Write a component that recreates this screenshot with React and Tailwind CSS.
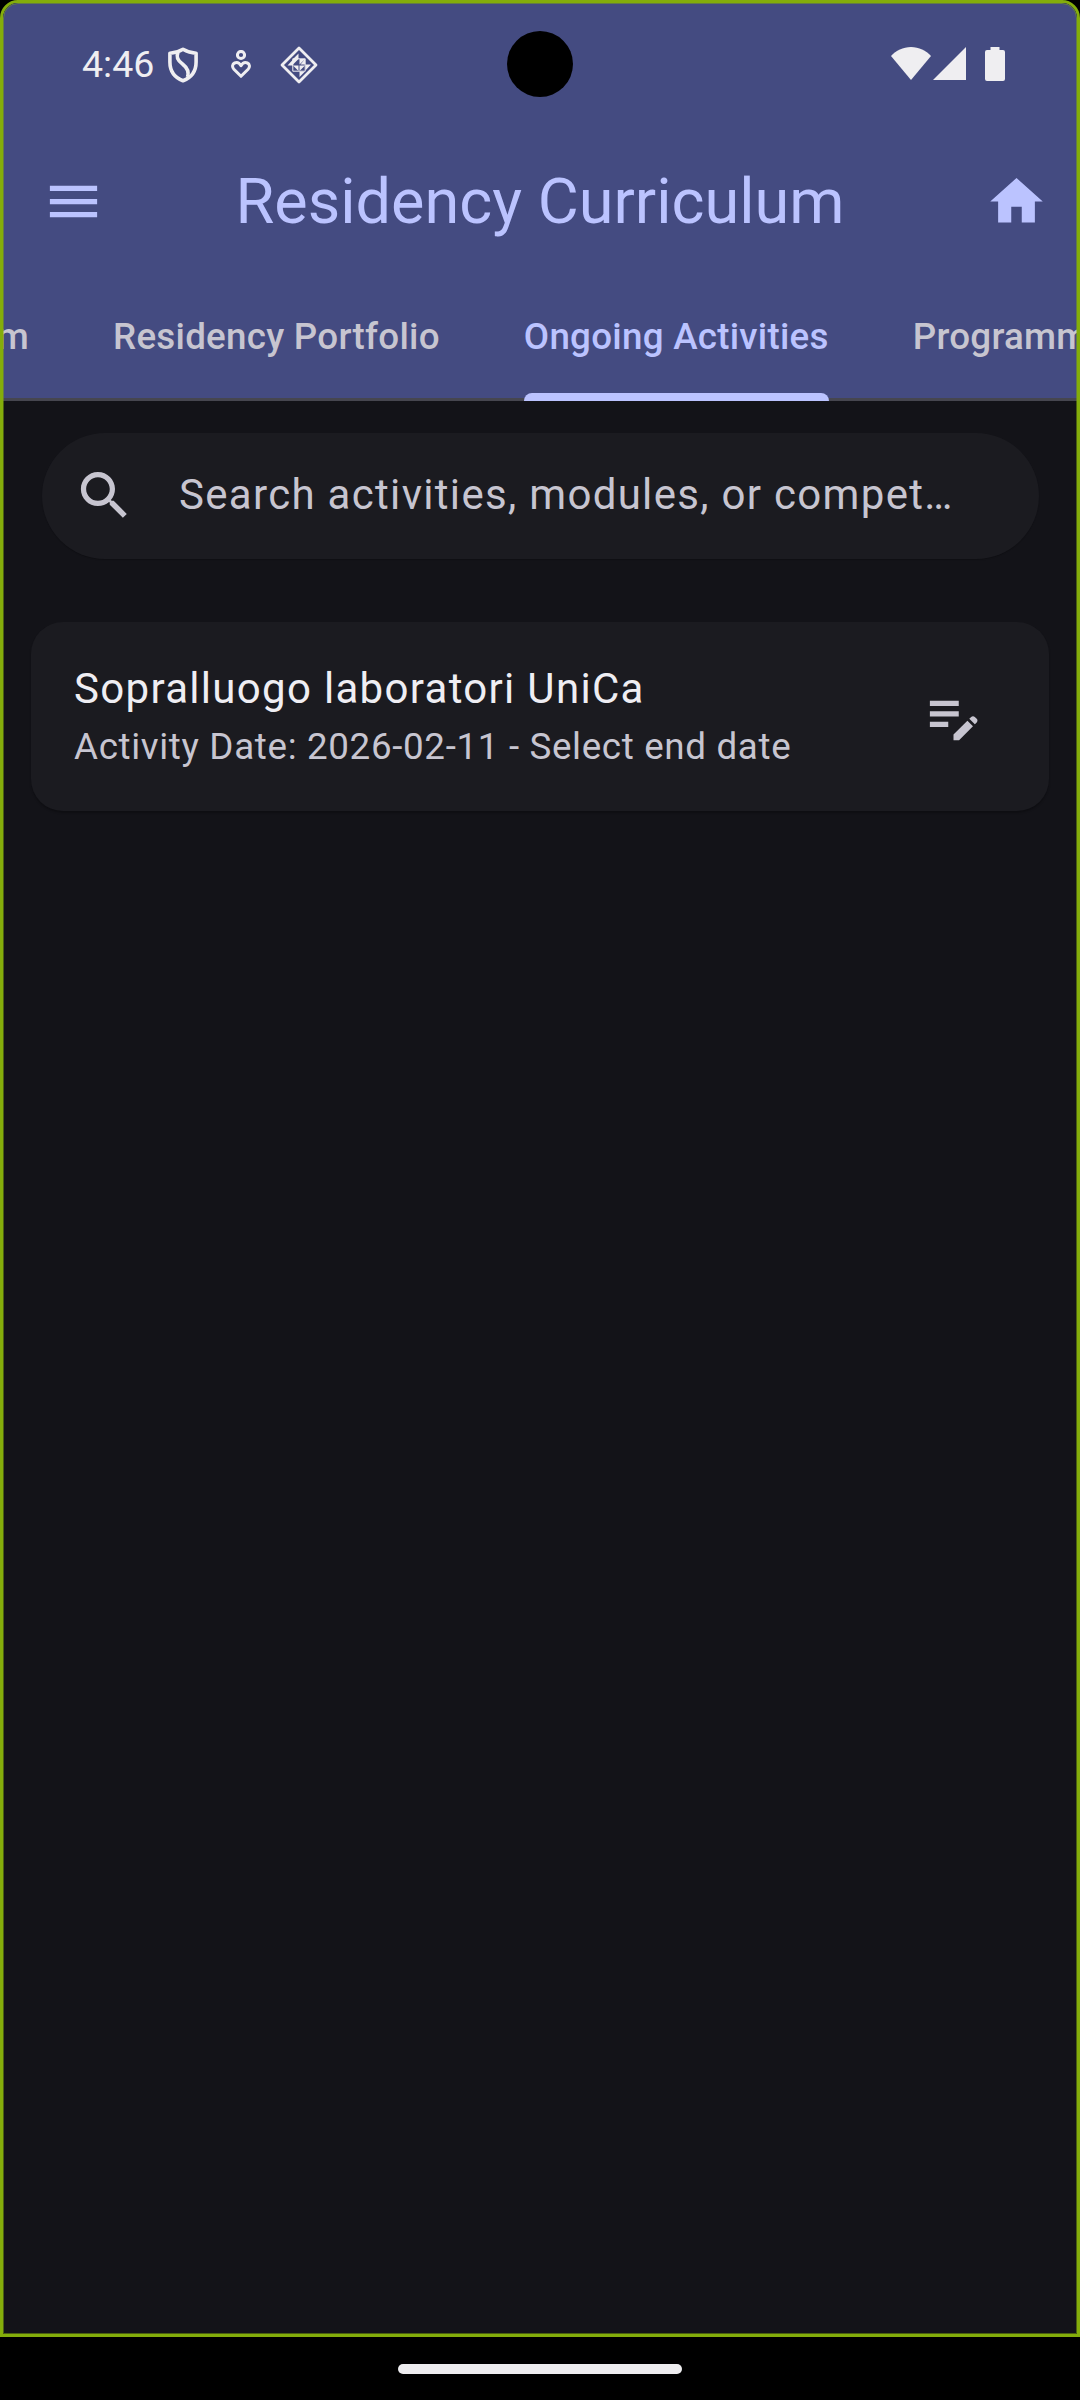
const Icon = ({ d, className }) => (
  <svg viewBox="0 0 24 24" fill="currentColor" className={`size-[63px] shrink-0 ${className ?? ""}`}>
    <path d={d} />
  </svg>
);

const ICONS = {
  menu: "M3 18h18v-2H3v2zm0-5h18v-2H3v2zm0-7v2h18V6H3z",
  home: "M10 20v-6h4v6h5v-8h3L12 3 2 12h3v8z",
  search:
    "M15.5 14h-.79l-.28-.27C15.41 12.59 16 11.11 16 9.5 16 5.91 13.09 3 9.5 3S3 5.91 3 9.5 5.91 16 9.5 16c1.61 0 3.09-.59 4.23-1.57l.27.28v.79l5 4.99L20.49 19l-4.99-5zm-6 0C7.01 14 5 11.99 5 9.5S7.01 5 9.5 5 14 7.01 14 9.5 11.99 14 9.5 14z",
  editNote:
    "M3 10h11v2H3v-2zm0-2h11V6H3v2zm0 8h7v-2H3v2zm15.01-3.13.71-.71c.39-.39 1.02-.39 1.41 0l.71.71c.39.39.39 1.02 0 1.41l-.71.71-2.12-2.12zm-.71.71-5.3 5.3V21h2.12l5.3-5.3-2.12-2.12z",
};

function StatusBar() {
  return (
    <div className="relative flex h-[123px] items-start pl-[79px] pr-[72px] pt-[44px] text-[#efeef1]">
      <span className="-mt-[4px] w-[72px] whitespace-nowrap text-[37.5px] leading-[43px]">4:46</span>
      <svg className="ml-[14px] h-[36px] w-[30px]" viewBox="0 0 30 36" fill="none" stroke="currentColor" strokeWidth="3.6" strokeLinejoin="round">
        <path d="M15 2.2C11 4.6 6.500 6 1.900 6.200V15C1.900 24 6.500 30.500 15 33.800 23.500 30.500 28.100 24 28.100 15V6.200C23.500 6 19 4.600 15 2.200Z" />
        <path d="M10 5C8 10 10 14 14.500 17 19 20.500 21.500 24 19.500 30" />
      </svg>
      <svg className="ml-[33px] mt-[3px] h-[29px] w-[20px]" viewBox="0 0 20 29" fill="none" stroke="currentColor" strokeWidth="3" strokeLinejoin="round">
        <circle cx="10" cy="5" r="3.600" />
        <path d="M10 26.300 2.900 19.200C.8 17 1.300 14 3.600 13 6 12 8.400 13 10 15.800 11.600 13 14 12 16.400 13 18.700 14 19.200 17 17.100 19.200Z" />
      </svg>
      <svg className="ml-[29px] -mt-[1px] size-[38px]" viewBox="0 0 38 38" fill="currentColor">
        <path d="M19 2 36 19 19 36 2 19Z" fill="none" stroke="currentColor" strokeWidth="2.800" strokeLinejoin="round" />
        <path d="M18.500 7.500V13H13ZM7.500 19.500H13V13.500ZM25.500 18.500H31L25.500 24.500ZM19.500 25.500H25L19.500 31ZM13 13H18.500L13 18.500ZM19.500 18.500V13H25ZM25 13V18.500H20.500ZM13 19.500H18.500V25ZM19.500 19.500H25L19.500 25Z" />
        <path d="M12.800 12.800H25.200V25.200H12.800Z" fill="none" stroke="currentColor" strokeWidth="1" />
      </svg>
      <div className="absolute left-[504px] top-[28px] size-[66px] rounded-full bg-black" />
      <div className="ml-auto flex items-start">
        <svg className="h-[33px] w-[40px]" viewBox="0 0 40 33" fill="currentColor">
          <path d="M20 33 0 9C5 3.500 12 0 20 0S35 3.500 40 9Z" />
        </svg>
        <svg className="ml-[2px] size-[33px]" viewBox="0 0 33 33" fill="currentColor">
          <path d="M33 0V33H0Z" />
        </svg>
        <svg className="ml-[19px] h-[34px] w-[20px]" viewBox="0 0 20 34" fill="currentColor">
          <path d="M5.500 0H14.500V3H18A2 2 0 0 1 20 5V32A2 2 0 0 1 18 34H2A2 2 0 0 1 0 32V5A2 2 0 0 1 2 3H5.500Z" />
        </svg>
      </div>
    </div>
  );
}

function Tab({ label, active, className }) {
  return (
    <div className={`relative flex h-full shrink-0 items-center pb-[4px] ${active ? "text-[#bbc3ff]" : "text-[#c7c5d0]"} ${className ?? ""}`}>
      <span>{label}</span>
      {active && <div className="absolute inset-x-0 bottom-0 h-[8px] rounded-t-[8px] bg-[#bbc3ff]" />}
    </div>
  );
}

export default function App() {
  return (
    <div className="flex h-[2400px] w-[1080px] flex-col overflow-hidden bg-black font-[Roboto,sans-serif]">
      <div className="relative flex h-[2337px] flex-col overflow-hidden rounded-t-[18px] border-[3px] border-[#84ad0b] bg-[#131318]">
        <div className="pointer-events-none absolute inset-0 z-10 rounded-t-[15px] border border-[#84ad0b]/50" />
        <header className="h-[398px] shrink-0 bg-[#444b81]">
          <StatusBar />
          <div className="flex h-[151px] items-center pl-[39px] text-[#bbc3ff]">
            <Icon d={ICONS.menu} />
            <h1 className="ml-[130.5px] whitespace-nowrap text-[63px] leading-[80px]">Residency Curriculum</h1>
            <Icon d={ICONS.home} className="ml-auto mr-[29px]" />
          </div>
          <nav className="relative flex h-[124px] gap-[84px] overflow-hidden whitespace-nowrap text-[36.75px] font-medium leading-[52px] tracking-[0.26px]">
            <div className="absolute inset-x-0 bottom-0 h-[3px] bg-[#46464f]" />
            <Tab label="m" className="w-[26px] justify-end overflow-hidden" />
            <Tab label="Residency Portfolio" />
            <Tab label="Ongoing Activities" active />
            <Tab label="Programm" />
          </nav>
        </header>

        <main className="flex flex-col px-[28px] pt-[32px]">
          <div className="ml-[11px] mr-[10px] flex h-[126px] items-center rounded-full bg-[#1b1b20] pl-[31px] text-[#c7c5d0] shadow-[0_1px_1px_rgba(0,0,0,0.2)]">
            <Icon d={ICONS.search} className="-mt-[2px]" />
            <span className="-mt-[3px] ml-[43px] whitespace-nowrap text-[42px] leading-[63px] tracking-[1.31px]">Search activities, modules, or compet…</span>
          </div>
          <section className="mt-[63px] flex h-[189px] items-center justify-between rounded-[32px] bg-[#1b1b20] pl-[43px] pr-[64px] shadow-[0_2px_2px_rgba(0,0,0,0.25)]">
            <div className="-mt-[2px] whitespace-nowrap">
              <div className="text-[42px] leading-[63px] tracking-[1.31px] text-[#efeef3]">Sopralluogo laboratori UniCa</div>
              <div className="text-[36.75px] leading-[54px] tracking-[0.66px] text-[#c7c5d0]">Activity Date: 2026-02-11 - Select end date</div>
            </div>
            <Icon d={ICONS.editNote} className="text-[#c7c5d0]" />
          </section>
        </main>
      </div>
      <div className="flex h-[63px] items-start justify-center pt-[27px]">
        <div className="h-[10px] w-[284px] rounded-full bg-[#eeedf0]" />
      </div>
    </div>
  );
}
